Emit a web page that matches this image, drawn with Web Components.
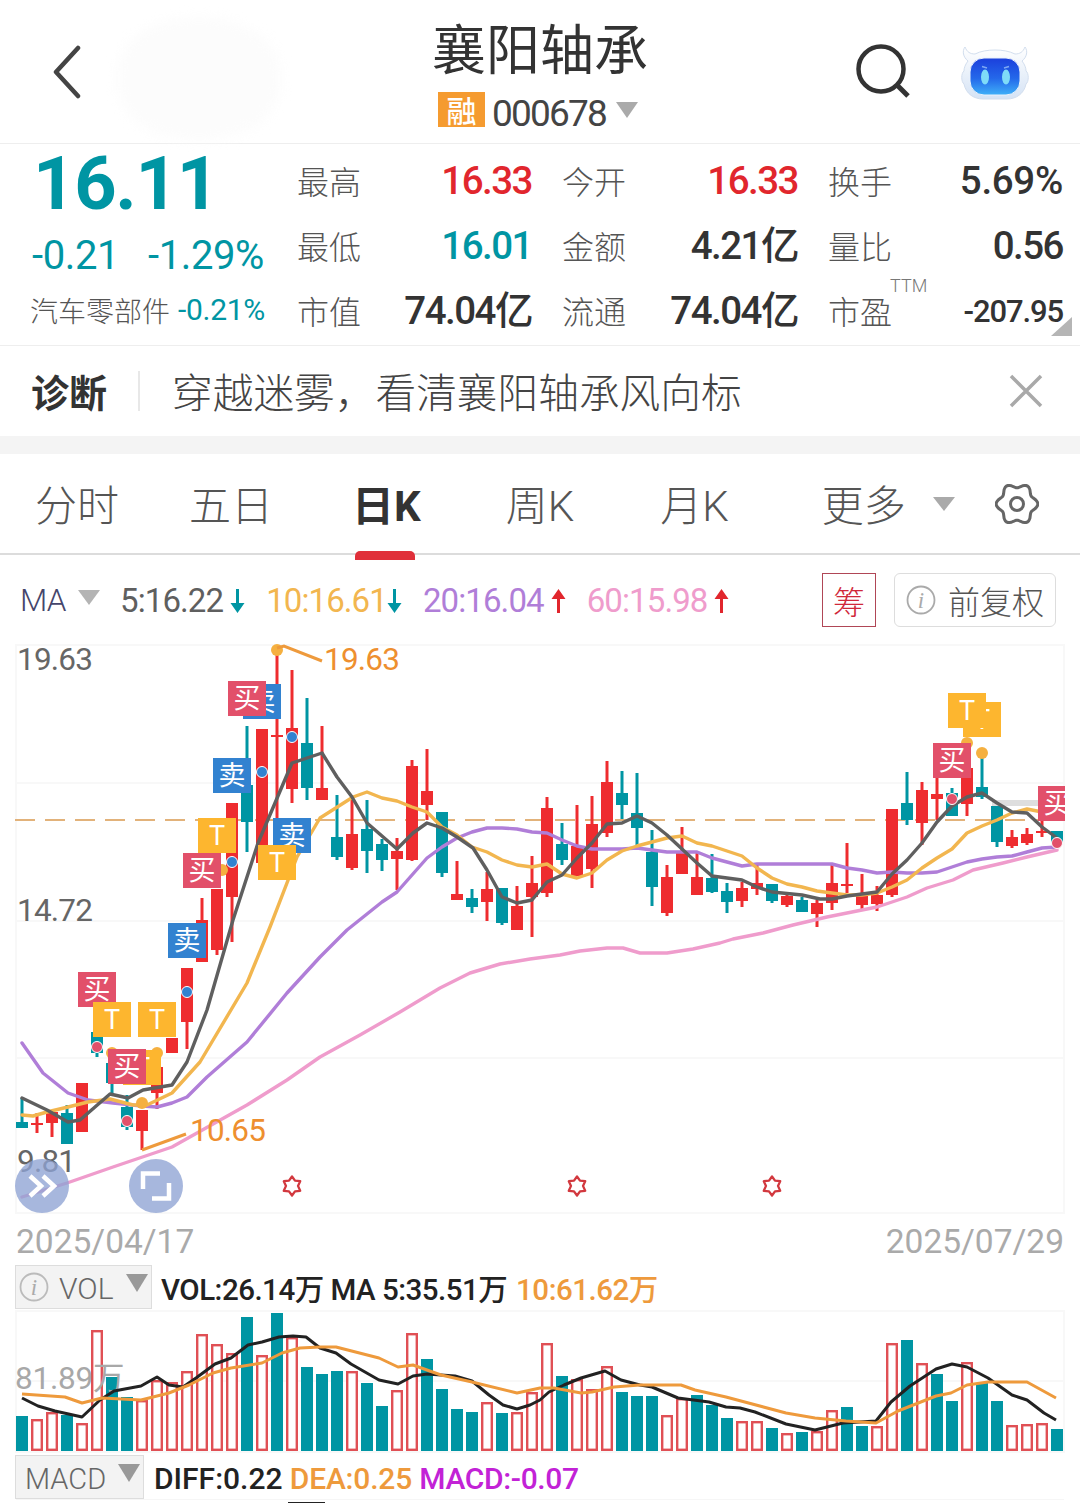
<!DOCTYPE html>
<html lang="zh">
<head>
<meta charset="utf-8">
<title>襄阳轴承</title>
<style>
    html, body { margin: 0; padding: 0; background: #fff; }
    body {
        width: 1080px;
        height: 1503px;
        overflow: hidden;
        font-family: Roboto, "Noto Sans CJK SC", sans-serif;
        color: #333;
    }
</style>
</head>
<body>
<stock-header></stock-header>
<quote-panel></quote-panel>
<tip-bar>穿越迷雾，看清襄阳轴承风向标</tip-bar>
<period-tabs></period-tabs>
<ma-legend></ma-legend>
<kline-chart></kline-chart>
<date-axis></date-axis>
<indicator-row name="VOL" info><b>VOL:26.14万 MA 5:35.51万</b> <b style="color:#ee9a3c;margin-left:2px">10:61.62万</b></indicator-row>
<volume-chart></volume-chart>
<indicator-row name="MACD"><b style="letter-spacing:0">DIFF:0.22</b> <b style="color:#ee9a3c">DEA:0.25</b> <b style="color:#c222d6;letter-spacing:-.35px">MACD:-0.07</b></indicator-row>
<macd-peek></macd-peek>

<script>
const RED = '#ee2c2f';
const TEAL = '#0095a3';
const NUM_FONT = 'Roboto, "Noto Sans CJK SC", sans-serif';

// Candles: colour, high, body top, body bottom, low (in page pixels)
const CANDLES = [
    ['t',1098,1122,1128,1128],['r',1113,1123,1125,1133],['r',1110,1112,1123,1137],['t',1105,1113,1144,1144],
    ['r',1083,1083,1132,1132],['t',1032,1032,1053,1057],['t',1063,1063,1083,1095],['t',1095,1107,1127,1130],
    ['r',1110,1110,1131,1150],['r',1067,1067,1093,1109],['r',1038,1038,1053,1053],['r',968,968,1022,1049],
    ['r',898,920,962,962],['r',889,889,950,955],['r',803,803,897,942],['t',726,785,822,852],
    ['r',729,729,863,863],['r',650,735,737,850],['r',670,728,789,803],['t',698,743,788,800],
    ['r',726,788,800,800],['t',795,837,857,860],['r',798,834,868,870],['t',800,829,851,873],
    ['t',839,844,860,871],['r',838,851,859,890],['r',760,766,860,861],['r',749,791,805,820],
    ['t',812,812,873,877],['r',861,894,900,900],['t',889,898,907,913],['r',872,889,902,921],
    ['t',888,888,923,925],['r',886,906,930,930],['r',856,883,897,937],['r',797,808,893,897],
    ['t',823,844,860,865],['r',805,846,876,876],['r',796,824,869,888],['r',761,782,833,837],
    ['t',771,793,805,819],['t',773,813,828,845],['t',830,852,887,906],['r',865,877,913,916],
    ['r',827,853,874,874],['r',853,877,895,895],['t',854,878,892,893],['t',883,891,902,913],
    ['r',882,888,901,907],['r',865,883,889,895],['t',884,884,901,903],['r',895,896,905,907],
    ['t',897,900,912,912],['r',900,903,914,927],['r',865,883,903,910],['r',843,884,886,893],
    ['r',874,895,905,910],['r',886,895,904,911],['r',809,809,895,897],['t',772,803,820,825],
    ['r',782,790,823,845],['r',778,794,799,820],['t',788,793,816,816],['r',768,768,804,816],
    ['t',758,787,797,799],['t',806,806,842,847],['r',830,837,846,848],['r',828,834,843,845],
    ['r',820,831,833,837],['t',831,831,843,843]
];

const MA5 = [[22,1098],[47,1110],[68,1122],[80,1120],[110,1094],[128,1098],[143,1090],[172,1085],[187,1062],[207,1010],[233,920],[258,843],[292,763],[322,753],[337,777],[352,797],[367,823],[397,849],[413,833],[427,823],[442,828],[457,837],[473,848],[487,870],[502,897],[517,903],[532,900],[547,882],[562,875],[577,858],[592,843],[607,824],[622,823],[637,816],[652,823],[667,835],[682,849],[697,863],[712,876],[742,880],[757,887],[772,892],[802,895],[820,899],[832,899],[847,896],[877,892],[892,874],[907,860],[922,843],[937,822],[952,806],[967,797],[982,793],[997,803],[1012,812],[1027,813],[1042,827],[1057,838]];
const MA10 = [[22,1115],[33,1116],[47,1112],[68,1107],[88,1102],[110,1099],[133,1105],[147,1105],[172,1093],[200,1062],[247,983],[270,927],[297,857],[320,818],[353,797],[367,792],[382,798],[397,801],[412,807],[427,812],[442,827],[457,835],[472,847],[487,852],[502,860],[517,865],[532,867],[547,864],[562,874],[577,878],[592,873],[607,860],[622,851],[637,846],[652,842],[667,838],[682,836],[697,843],[712,846],[742,856],[757,868],[772,878],[787,884],[802,887],[817,891],[832,893],[847,895],[862,895],[877,893],[892,887],[907,880],[922,868],[937,858],[952,849],[967,833],[982,826],[997,820],[1012,813],[1027,809],[1042,812]];
const MA20 = [[22,1043],[43,1073],[68,1093],[88,1100],[113,1103],[142,1106],[157,1107],[172,1103],[187,1097],[207,1077],[247,1042],[287,993],[320,957],[347,930],[382,902],[397,892],[412,875],[427,858],[442,847],[457,838],[472,832],[487,828],[502,828],[517,829],[532,832],[547,833],[562,840],[577,846],[592,849],[622,849],[637,848],[652,850],[667,852],[697,852],[712,858],[742,866],[757,864],[832,864],[847,868],[862,870],[877,873],[892,872],[907,873],[922,873],[937,872],[952,867],[967,862],[982,859],[997,857],[1012,856],[1027,852],[1042,848],[1057,847]];
const MA60 = [[22,1197],[67,1183],[113,1167],[172,1147],[197,1133],[247,1105],[287,1080],[320,1057],[360,1035],[400,1012],[440,988],[470,973],[500,964],[530,959],[560,955],[580,951],[607,948],[623,948],[640,953],[667,953],[693,949],[720,943],[733,939],[763,933],[793,925],[827,917],[877,907],[907,897],[927,888],[953,880],[973,870],[1003,863],[1027,857],[1057,850]];

// Signal badges, drawn in this order, so later ones lie over earlier ones
const BADGES = [
    ['T',963,702],['T',948,693],['买',933,743],['买',1038,786],
    ['卖',243,684],['买',228,681],['卖',213,758],['T',198,818],['买',183,853],['卖',273,818],['T',258,845],
    ['卖',168,923],['买',78,972],['T',93,1002],['T',138,1002],['T',123,1050],['买',108,1049]
];
const BADGE_COLOR = { '买': '#e2506a', '卖': '#3282d0', 'T': '#fdb62f' };

// Small dots on the candles: x, y, colour
const DOTS = [
    [277,650,'#f5b040'],[222,870,'#f5b040'],[112,1053,'#f5b040'],[142,1103,'#f5b040'],[157,1053,'#f5b040'],
    [967,743,'#f5b040'],[982,753,'#f5b040'],
    [262,772,'#3282d0'],[292,737,'#3282d0'],[232,862,'#3282d0'],[187,992,'#3282d0'],
    [97,1047,'#e2506a'],[127,1121,'#e2506a'],[952,799,'#e2506a'],[1057,843,'#e2506a']
];

// Volume bars: r = hollow red, t = solid teal, value is the bar top in page pixels
const VOL_BARS = [
    ['t',1416],['r',1419],['r',1412],['t',1415],['r',1423],['r',1330],['t',1377],['t',1397],['r',1400],['r',1380],
    ['r',1382],['r',1371],['r',1334],['r',1344],['r',1353],['t',1317],['r',1355],['t',1313],['r',1337],['t',1367],
    ['t',1374],['t',1371],['r',1371],['t',1383],['t',1406],['r',1390],['r',1333],['t',1359],['t',1389],['t',1409],
    ['t',1412],['r',1402],['t',1413],['r',1412],['r',1392],['r',1343],['t',1376],['r',1379],['r',1389],['r',1366],
    ['t',1392],['t',1396],['t',1396],['r',1415],['r',1398],['t',1395],['t',1405],['t',1418],['r',1421],['r',1421],
    ['t',1428],['r',1433],['t',1432],['r',1431],['r',1410],['t',1407],['t',1426],['r',1426],['r',1343],['t',1340],
    ['r',1363],['t',1374],['t',1401],['r',1362],['t',1383],['t',1401],['r',1425],['r',1424],['r',1423],['t',1429]
];

const VOL_LINE = [[22,1398],[38,1406],[55,1411],[82,1417],[100,1400],[114,1391],[141,1386],[157,1377],[169,1385],[183,1387],[196,1378],[215,1364],[231,1358],[248,1345],[262,1342],[279,1337],[293,1336],[306,1337],[320,1348],[336,1353],[351,1364],[379,1380],[398,1384],[413,1376],[427,1374],[455,1376],[472,1381],[489,1395],[503,1405],[517,1409],[530,1405],[540,1400],[549,1392],[564,1385],[581,1378],[605,1371],[621,1380],[640,1385],[652,1387],[678,1398],[709,1402],[726,1407],[740,1408],[755,1412],[786,1424],[815,1430],[843,1423],[876,1421],[891,1402],[910,1386],[936,1369],[952,1364],[967,1367],[988,1378],[1012,1395],[1027,1400],[1044,1413],[1056,1420]];
const VOL_AVG = [[22,1394],[65,1397],[82,1403],[102,1398],[141,1400],[169,1393],[189,1385],[213,1373],[231,1368],[262,1363],[282,1353],[300,1348],[320,1347],[336,1347],[379,1358],[398,1367],[413,1365],[441,1375],[472,1382],[517,1393],[540,1388],[554,1388],[581,1393],[592,1392],[614,1387],[640,1385],[681,1385],[695,1390],[726,1397],[786,1413],[815,1418],[846,1421],[876,1423],[898,1411],[936,1396],[951,1393],[967,1385],[988,1382],[1027,1382],[1056,1398]];

const pointsOf = line => line.map(p => p.join(',')).join(' ');

// Wavy gear outline: six lobes around the centre
function gearPath(cx, cy, radius, wave) {
    const pts = [];
    for (let a = 0; a < 360; a += 4) {
        const t = a * Math.PI / 180;
        const r = radius + wave * Math.cos(6 * t);
        pts.push((cx + r * Math.cos(t)).toFixed(1) + ' ' + (cy + r * Math.sin(t)).toFixed(1));
    }
    return 'M' + pts.join('L') + 'Z';
}

// Top bar with back arrow, stock name and actions
class StockHeader extends HTMLElement {
    connectedCallback() {
        this.attachShadow({ mode: 'open' }).innerHTML = `
            <style>
                :host { display: flex; position: relative; height: 143px; border-bottom: 1px solid #eee; padding: 0 52px; align-items: center; justify-content: space-between; }
                .smudge { position: absolute; left: 118px; top: 18px; width: 162px; height: 122px; border-radius: 45%; background: #fcfcfc; filter: blur(6px); }
                .mid { position: absolute; left: 0; right: 0; top: 13px; display: flex; flex-direction: column; align-items: center; }
                h1 { margin: 0; font: 400 54px/68px "Noto Sans CJK SC", sans-serif; color: #333; }
                .sub { display: flex; align-items: center; height: 46px; margin-top: 5px; padding-right: 4px; }
                .tag { width: 47px; height: 35px; background: #f59b30; color: #fff; font: 500 30px/35px "Noto Sans CJK SC", sans-serif; text-align: center; margin-right: 7px; }
                .code { font: 400 37px/46px Roboto, sans-serif; letter-spacing: -1.8px; color: #444; margin-top: 9px; }
                .caret { width: 0; height: 0; border: 11px solid transparent; border-top: 16px solid #aaa; border-bottom: 0; margin: 1px 0 0 10px; }
                .right { display: flex; align-items: center; gap: 50px; margin-right: -1px; position: relative; }
                .search { margin-top: -2px; }
                .robot { margin-top: 2px; }
                svg { display: block; position: relative; }
            </style>
            <div class="smudge"></div>
            <svg width="30" height="54" viewBox="0 0 30 54" fill="none" stroke="#444" stroke-width="4.500" stroke-linecap="round" stroke-linejoin="round"><path d="M26 3 4 27l22 24"/></svg>
            <div class="mid">
                <h1>襄阳轴承</h1>
                <div class="sub"><span class="tag">融</span><span class="code">000678</span><span class="caret"></span></div>
            </div>
            <div class="right">
                <svg class="search" width="56" height="56" viewBox="0 0 56 56" fill="none" stroke="#333" stroke-width="4.500"><circle cx="26" cy="26" r="22.500"/><path d="M42 42 53 53" stroke-width="5"/></svg>
                <svg class="robot" width="68" height="56" viewBox="0 0 68 56">
                    <defs>
                        <linearGradient id="screen" x1="0" y1="0" x2="0" y2="1"><stop offset="0" stop-color="#1b3fdc"/><stop offset=".55" stop-color="#2468ea"/><stop offset="1" stop-color="#3fb0f8"/></linearGradient>
                        <linearGradient id="shell" x1="0" y1="0" x2="0" y2="1"><stop offset="0" stop-color="#fff"/><stop offset="1" stop-color="#d5e3f5"/></linearGradient>
                    </defs>
                    <path d="M4 2C1 6 2 12 7 16 4 20 3 23 3 26 0 28 0 37 3 39 5 49 13 54 22 54H46C55 54 63 49 65 39 68 37 68 28 65 26 65 23 64 20 61 16 66 12 67 6 64 2 62 7 59 9 54 9 48 6 41 5 34 5 27 5 20 6 14 9 9 9 6 7 4 2Z" fill="url(#shell)" stroke="#d2deee" stroke-width="1"/>
                    <rect x="9" y="13" width="50" height="37" rx="14" fill="url(#screen)" stroke="#e9f1fb" stroke-width="1"/>
                    <ellipse cx="24" cy="32" rx="4" ry="7.500" fill="#7fdcf8"/><ellipse cx="45" cy="32" rx="4" ry="7.500" fill="#7fdcf8"/>
                    <path d="M21 21.500 26 23M48 21.500 43 23" stroke="#7fa8f4" stroke-width="1.500" fill="none"/>
                </svg>
            </div>`;
    }
}

// One label + value pair in the quote grid
class QuoteCell extends HTMLElement {
    connectedCallback() {
        const small = this.hasAttribute('small');
        const track = this.getAttribute('track') || (small ? -1.1 : -1.5);
        this.attachShadow({ mode: 'open' }).innerHTML = `
            <style>
                :host { display: flex; justify-content: space-between; align-items: center; height: 65px; }
                .l { font: 300 32px/1 "Noto Sans CJK SC", sans-serif; color: #555; position: relative; top: -2px; }
                .l sup { position: absolute; left: 62px; top: -17px; font: 300 18px/1 Roboto, sans-serif; color: #777; }
                .v { font: 500 ${small ? 31 : 38.5}px/1 ${NUM_FONT}; letter-spacing: ${track}px; color: ${this.getAttribute('color') || '#333'}; }
            </style>
            <span class="l">${this.getAttribute('label')}${this.hasAttribute('ttm') ? '<sup>TTM</sup>' : ''}</span>
            <span class="v">${this.getAttribute('value')}</span>`;
    }
}

// Price block plus the nine quote cells
class QuotePanel extends HTMLElement {
    connectedCallback() {
        this.attachShadow({ mode: 'open' }).innerHTML = `
            <style>
                :host { display: grid; position: relative; grid-template-columns: 267px 235px 236px 235px; column-gap: 30px; height: 201px; border-bottom: 1px solid #eee; }
                .price { display: flex; flex-direction: column; padding-left: 32px; }
                .big { font: 700 74px/80px ${NUM_FONT}; color: #0095a3; margin: 0 0 0 1px; letter-spacing: -1.3px; }
                .chg { display: flex; gap: 29px; font: 400 40px/44px ${NUM_FONT}; color: #0095a3; letter-spacing: -.4px; margin-top: 10px; }
                .ind { display: flex; gap: 8px; font: 300 28px/40px "Noto Sans CJK SC", sans-serif; color: #555; margin: 12px 0 0 -2px; white-space: nowrap; }
                .ind b { font: 400 30px/40px ${NUM_FONT}; color: #0095a3; letter-spacing: -.3px; }
                .col { display: flex; flex-direction: column; padding-top: 5px; }
                .corner { position: absolute; right: 8px; bottom: 9px; width: 0; height: 0; border-left: 21px solid transparent; border-bottom: 19px solid #b5b5b5; }
            </style>
            <div class="price">
                <div class="big">16.11</div>
                <div class="chg"><span>-0.21</span><span>-1.29%</span></div>
                <div class="ind"><span>汽车零部件</span><b>-0.21%</b></div>
            </div>
            <div class="col">
                <quote-cell label="最高" value="16.33" color="#e1262d"></quote-cell>
                <quote-cell label="最低" value="16.01" color="#0095a3"></quote-cell>
                <quote-cell label="市值" value="74.04亿"></quote-cell>
            </div>
            <div class="col">
                <quote-cell label="今开" value="16.33" color="#e1262d"></quote-cell>
                <quote-cell label="金额" value="4.21亿"></quote-cell>
                <quote-cell label="流通" value="74.04亿"></quote-cell>
            </div>
            <div class="col">
                <quote-cell label="换手" value="5.69%" track="-.3"></quote-cell>
                <quote-cell label="量比" value="0.56"></quote-cell>
                <quote-cell label="市盈" value="-207.95" small ttm></quote-cell>
            </div>
            <div class="corner"></div>`;
    }
}

// Diagnosis strip with a close button
class TipBar extends HTMLElement {
    connectedCallback() {
        this.attachShadow({ mode: 'open' }).innerHTML = `
            <style>
                :host { display: flex; align-items: center; height: 90px; padding-left: 31px; border-bottom: 18px solid #f4f4f4; }
                b { font: 700 38px/1 "Noto Sans CJK SC", sans-serif; color: #333; padding-right: 31px; border-right: 2px solid #e8e8e8; height: 40px; line-height: 40px; }
                .txt { flex: 1; padding-left: 32px; font: 300 40.700px/1 "Noto Sans CJK SC", sans-serif; color: #444; }
                svg { margin-right: 37px; }
            </style>
            <b>诊断</b><span class="txt"><slot></slot></span>
            <svg width="34" height="34" viewBox="0 0 34 34" stroke="#a9a9a9" stroke-width="3.500"><path d="M2 2 32 32M32 2 2 32"/></svg>`;
    }
}

// Period tabs: 分时, 五日, 日K ...
class PeriodTabs extends HTMLElement {
    connectedCallback() {
        this.attachShadow({ mode: 'open' }).innerHTML = `
            <style>
                :host { display: flex; position: relative; align-items: center; box-sizing: border-box; height: 101px; padding: 7px 0 0 35px; border-bottom: 2px solid #dcdcdc; font: 300 42px/1 Roboto, "Noto Sans CJK SC", sans-serif; color: #555; }
                span { display: block; }
                .on { position: relative; color: #333; font-weight: 700; }
                .on::after { content: ""; position: absolute; left: 3px; width: 60px; bottom: -32px; height: 9px; border-radius: 5px 5px 0 0; background: #e0303a; }
                .caret { width: 0; height: 0; border: 11px solid transparent; border-top: 14px solid #aaa; border-bottom: 0; margin: -6px 0 0 27px; padding: 0; }
                svg { margin: -6px 0 0 40px; }
            </style>
            <span style="width:154px">分时</span>
            <span style="width:163px">五日</span>
            <span class="on" style="margin-right:85px">日K</span>
            <span style="margin-right:86px">周K</span>
            <span style="margin-right:93px">月K</span>
            <span>更多</span><span class="caret"></span>
            <svg width="44" height="46" viewBox="0 0 44 46" fill="none" stroke="#666" stroke-width="3" stroke-linejoin="round"><path d="${gearPath(22, 23, 18.500, 2.300)}"/><circle cx="22" cy="23" r="6.500"/></svg>`;
    }
}

// MA values row with the two chart option buttons
class MaLegend extends HTMLElement {
    connectedCallback() {
        const arrow = (color, up, left) => `<svg style="margin-left:${left}px" width="15" height="26" viewBox="0 0 15 26"><path fill="${color}" d="${up ? 'M7.500 1 14.500 11H9V25H6V11H.5Z' : 'M7.500 25 14.500 15H9V1H6V15H.5Z'}"/></svg>`;
        const item = (text, color, up, left, gap) => `<span class="it" style="color:${color};margin-right:${gap}px">${text}${arrow(up ? '#e1262d' : TEAL, up, left)}</span>`;
        this.attachShadow({ mode: 'open' }).innerHTML = `
            <style>
                :host { display: flex; align-items: center; height: 54px; padding: 18px 24px 9px 20px; font: 400 33px/54px ${NUM_FONT}; letter-spacing: -.9px; }
                .ma { color: #45456b; font-weight: 300; font-size: 31.500px; width: 57px; padding-top: 2px; }
                .caret { width: 0; height: 0; border: 11px solid transparent; border-top: 15px solid #b4b4b4; border-bottom: 0; margin: -6px 20px 0 1px; }
                .it { display: flex; align-items: center; font-weight: 400; padding-top: 2px; }
                .chip { box-sizing: border-box; width: 54px; height: 54px; border: 1.500px solid #b04656; color: #d0283a; font: 300 32px/52px "Noto Sans CJK SC", sans-serif; text-align: center; margin-left: auto; letter-spacing: 0; }
                .fq { box-sizing: border-box; display: flex; align-items: center; width: 162px; height: 54px; border: 1.500px solid #ddd; border-radius: 6px; margin-left: 18px; padding-left: 11px; font: 300 32px/1 "Noto Sans CJK SC", sans-serif; color: #555; letter-spacing: 0; }
                .fq svg { margin-right: 12px; }
            </style>
            <span class="ma">MA</span><span class="caret"></span>
            ${item('5:16.22', '#5f5f5f', false, 7, 21)}
            ${item('10:16.61', '#f2b64f', false, 0, 21)}
            ${item('20:16.04', '#b07ed8', true, 7, 21)}
            ${item('60:15.98', '#ef9ccc', true, 7, 0)}
            <span class="chip">筹</span>
            <span class="fq"><svg width="30" height="30" viewBox="0 0 30 30"><circle cx="15" cy="15" r="13.500" fill="none" stroke="#aaa" stroke-width="1.800"/><text x="15" y="23" text-anchor="middle" font-family="Liberation Serif" font-style="italic" font-size="23" fill="#aaa">i</text></svg>前复权</span>`;
    }
}

// Main candle chart, drawn in page coordinates on one svg
class KlineChart extends HTMLElement {
    connectedCallback() {
        const grid = [783, 921, 1058].map(y => `<path d="M16 ${y}H1064" stroke="#f8f8f8" stroke-width="2"/>`).join('');
        const candles = CANDLES.map(([c, hi, top, bot, lo], i) => {
            const x = 22 + 15 * i;
            const col = c === 'r' ? RED : TEAL;
            return `<path d="M${x} ${hi}V${lo}" stroke="${col}" stroke-width="3"/><rect x="${x - 6}" y="${top}" width="12" height="${bot - top}" fill="${col}"/>`;
        }).join('');
        const lines = [[MA60, '#ef9ccc'], [MA20, '#b07ed8'], [MA10, '#f2b64f'], [MA5, '#5f5f5f']].map(([pts, col]) =>
            `<polyline points="${pointsOf(pts)}" fill="none" stroke="${col}" stroke-width="3.400" stroke-linejoin="round" stroke-linecap="round"/>`).join('');
        const dots = DOTS.map(([x, y, col]) => `<circle cx="${x}" cy="${y}" r="${col === '#f5b040' ? 6 : 5.500}" fill="${col}" ${col === '#f5b040' ? '' : 'stroke="#fff" stroke-width="1"'}/>`).join('');
        const badges = BADGES.map(([t, x, y]) => `<g><rect x="${x}" y="${y}" width="38" height="35" fill="${BADGE_COLOR[t]}"/><text x="${x + 19}" y="${y + 27}" text-anchor="middle" class="${t === 'T' ? 'bt' : 'bc'}">${t}</text></g>`).join('');
        const stars = [292, 577, 772].map(x => `<path transform="translate(${x} 1186)" fill="none" stroke="#d2383e" stroke-width="2.300" stroke-linejoin="round" d="M0-9.500 3-5.300 8.200-4.800 6-.1 8.200 4.800 3 5.300 0 9.500-3 5.300-8.200 4.800-6-.1-8.200-4.800-3-5.300Z"/>`).join('');
        this.attachShadow({ mode: 'open' }).innerHTML = `
            <style>
                :host { display: block; height: 584px; }
                svg { display: block; }
                text { font-family: Roboto, "Noto Sans CJK SC", sans-serif; }
                .ax { font-size: 31.500px; fill: #666; letter-spacing: -.8px; }
                .hl { font-size: 31.500px; fill: #ee8f2f; letter-spacing: -.8px; }
                .bc { font: 400 27px "Noto Sans CJK SC", sans-serif; fill: #fff; }
                .bt { font: 400 27px Roboto, sans-serif; fill: #fff; }
            </style>
            <svg width="1080" height="584" viewBox="0 636 1080 584">
                <defs><clipPath id="plot"><rect x="0" y="636" width="1065" height="584"/></clipPath></defs>
                ${grid}
                <rect x="16" y="645" width="1048" height="568" fill="none" stroke="#f8f8f8" stroke-width="2"/>
                <text class="ax" x="17" y="670">19.63</text>
                <text class="ax" x="17" y="921">14.72</text>
                <text class="ax" x="17" y="1172">9.81</text>
                <path d="M15 820H1064" stroke="#e2b27a" stroke-width="2" stroke-dasharray="20 10"/>
                <rect x="992" y="800" width="46" height="6" fill="#dedede"/>
                <g clip-path="url(#plot)">${candles}${lines}${dots}${badges}</g>
                <path d="M277 648 284 646 322 661" fill="none" stroke="#ee9a3c" stroke-width="3"/>
                <text class="hl" x="324" y="670">19.63</text>
                <path d="M142 1150 186 1134" fill="none" stroke="#ee9a3c" stroke-width="3"/>
                <text class="hl" x="190" y="1141">10.65</text>
                ${stars}
                <circle cx="42" cy="1186" r="27" fill="#8ea3d4" fill-opacity=".78"/>
                <path d="M30 1176 41 1186 30 1196M43 1176 54 1186 43 1196" fill="none" stroke="#fff" stroke-width="4.500"/>
                <circle cx="156" cy="1186" r="27" fill="#8ea3d4" fill-opacity=".78"/>
                <path d="M143 1189V1173.500H160M169 1183V1198.500H152" fill="none" stroke="#fff" stroke-width="4.500"/>
            </svg>`;
    }
}

// First and last date under the candle chart
class DateAxis extends HTMLElement {
    connectedCallback() {
        this.attachShadow({ mode: 'open' }).innerHTML = `
            <style>
                :host { display: flex; justify-content: space-between; align-items: center; height: 45px; padding: 0 16px; font: 400 33.500px/40px ${NUM_FONT}; color: #aaa; }
                span { position: relative; top: -1px; }
            </style>
            <span>2025/04/17</span><span>2025/07/29</span>`;
    }
}

// Grey indicator picker followed by its values
class IndicatorRow extends HTMLElement {
    connectedCallback() {
        const info = this.hasAttribute('info');
        this.attachShadow({ mode: 'open' }).innerHTML = `
            <style>
                :host { display: flex; align-items: center; height: 44px; padding-left: 15px; }
                .pick { box-sizing: border-box; display: flex; align-items: center; height: 44px; width: ${info ? 137 : 129}px; background: #f3f3f3; border: 1.500px solid #ddd; font: 300 ${info ? 30 : 29}px/1 ${NUM_FONT}; color: #666; padding-left: ${info ? 3 : 9}px; }
                .pick svg { margin-right: 10px; }
                .name { flex: 1; padding-top: 4px; }
                .caret { width: 0; height: 0; border: 11px solid transparent; border-top: 18px solid #999; border-bottom: 0; margin: -8px 3px 0 0; }
                .vals { margin-left: ${info ? 9 : 10}px; padding-top: ${info ? 6 : 4}px; font: 500 ${info ? 29.5 : 30}px/40px ${NUM_FONT}; color: #222; white-space: pre; letter-spacing: ${info ? -0.5 : -0.2}px; }
                ::slotted(b) { font-weight: 500; }
            </style>
            <div class="pick">
                ${info ? '<svg width="30" height="30" viewBox="0 0 30 30"><circle cx="15" cy="15" r="13.500" fill="none" stroke="#bbb" stroke-width="1.800"/><text x="15" y="23" text-anchor="middle" font-family="Liberation Serif" font-style="italic" font-size="23" fill="#aaa">i</text></svg>' : ''}
                <span class="name">${this.getAttribute('name')}</span><span class="caret"></span>
            </div>
            <div class="vals"><slot></slot></div>`;
    }
}

// Volume bars with two average lines
class VolumeChart extends HTMLElement {
    connectedCallback() {
        const bars = VOL_BARS.map(([c, top], i) => {
            const x = 16 + 15 * i;
            return c === 't'
                ? `<rect x="${x}" y="${top}" width="12" height="${1451 - top}" fill="${TEAL}"/>`
                : `<rect x="${x + 1.2}" y="${top + 1.2}" width="9.600" height="${1451 - top - 2.4}" fill="#fff" stroke="#e05055" stroke-width="2.400"/>`;
        }).join('');
        this.attachShadow({ mode: 'open' }).innerHTML = `
            <style>
                :host { display: block; height: 146px; }
                svg { display: block; }
                text { font: 400 31.500px Roboto, "Noto Sans CJK SC", sans-serif; fill: #a8a8a8; letter-spacing: -.2px; }
            </style>
            <svg width="1080" height="146" viewBox="0 1309 1080 146">
                <rect x="16" y="1311" width="1048" height="141" fill="none" stroke="#f8f8f8" stroke-width="2"/>
                <path d="M16 1381H1064" stroke="#f8f8f8" stroke-width="2"/>
                ${bars}
                <text x="15" y="1389">81.89万</text>
                <polyline points="${pointsOf(VOL_LINE)}" fill="none" stroke="#222" stroke-width="3" stroke-linejoin="round"/>
                <polyline points="${pointsOf(VOL_AVG)}" fill="none" stroke="#ee9a3c" stroke-width="3" stroke-linejoin="round"/>
            </svg>`;
    }
}

// Top edge of the MACD chart, just cut off by the bottom of the window
class MacdPeek extends HTMLElement {
    connectedCallback() {
        this.attachShadow({ mode: 'open' }).innerHTML = `
            <style>
                :host { display: block; height: 4px; margin: 0 16px; border-top: 1px solid #f6f6f6; }
                div { width: 37px; height: 2px; margin: 2px 0 0 272px; background: #222; }
            </style>
            <div></div>`;
    }
}

customElements.define('stock-header', StockHeader);
customElements.define('quote-cell', QuoteCell);
customElements.define('quote-panel', QuotePanel);
customElements.define('tip-bar', TipBar);
customElements.define('period-tabs', PeriodTabs);
customElements.define('ma-legend', MaLegend);
customElements.define('kline-chart', KlineChart);
customElements.define('date-axis', DateAxis);
customElements.define('indicator-row', IndicatorRow);
customElements.define('volume-chart', VolumeChart);
customElements.define('macd-peek', MacdPeek);
</script>
</body>
</html>
